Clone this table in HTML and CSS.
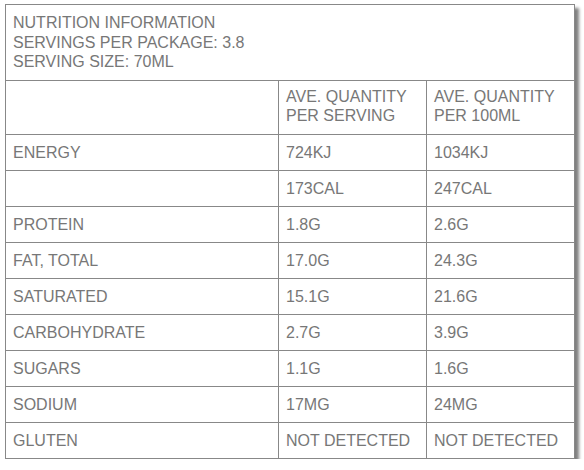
FILE: index.html
```html
<!DOCTYPE html>
<html>
<head>
<meta charset="utf-8">
<link rel="stylesheet" href="styles.css">
</head>
<body>
<table class="nutri">
  <colgroup>
    <col class="c1">
    <col class="c2">
    <col class="c3">
  </colgroup>
  <tr class="intro">
    <td colspan="3">NUTRITION INFORMATION<br>SERVINGS PER PACKAGE: 3.8<br>SERVING SIZE: 70ML</td>
  </tr>
  <tr class="head">
    <td></td>
    <td>AVE. QUANTITY<br>PER SERVING</td>
    <td>AVE. QUANTITY<br>PER 100ML</td>
  </tr>
  <tr><td>ENERGY</td><td>724KJ</td><td>1034KJ</td></tr>
  <tr><td></td><td>173CAL</td><td>247CAL</td></tr>
  <tr><td>PROTEIN</td><td>1.8G</td><td>2.6G</td></tr>
  <tr><td>FAT, TOTAL</td><td>17.0G</td><td>24.3G</td></tr>
  <tr><td>SATURATED</td><td>15.1G</td><td>21.6G</td></tr>
  <tr><td>CARBOHYDRATE</td><td>2.7G</td><td>3.9G</td></tr>
  <tr><td>SUGARS</td><td>1.1G</td><td>1.6G</td></tr>
  <tr><td>SODIUM</td><td>17MG</td><td>24MG</td></tr>
  <tr><td>GLUTEN</td><td>NOT DETECTED</td><td>NOT DETECTED</td></tr>
</table>
</body>
</html>
```
FILE: styles.css
```css
html, body {
  margin: 0;
  padding: 0;
  background: #fff;
}
body {
  padding: 4px 0 0 5px;
}
.nutri {
  border-collapse: collapse;
  border: 1px solid #222;
  width: 569px;
  font-family: "Liberation Sans", Arial, sans-serif;
  font-size: 16px;
  color: #777;
  box-shadow: 4px 4px 3px #808080;
  table-layout: fixed;
}
.c1 { width: 273px; }
.c2 { width: 148px; }
.c3 { width: 148px; }
.nutri td {
  border: 1px solid #888;
  padding: 0 7px;
  height: 35px;
  text-align: left;
  vertical-align: middle;
  line-height: 19px;
}
.nutri tr.intro td {
  height: 54px;
  padding: 8px 7px 8px 7px;
  line-height: 19.5px;
}
.nutri tr.head td {
  height: 50px;
  padding-bottom: 3px;
}
```
